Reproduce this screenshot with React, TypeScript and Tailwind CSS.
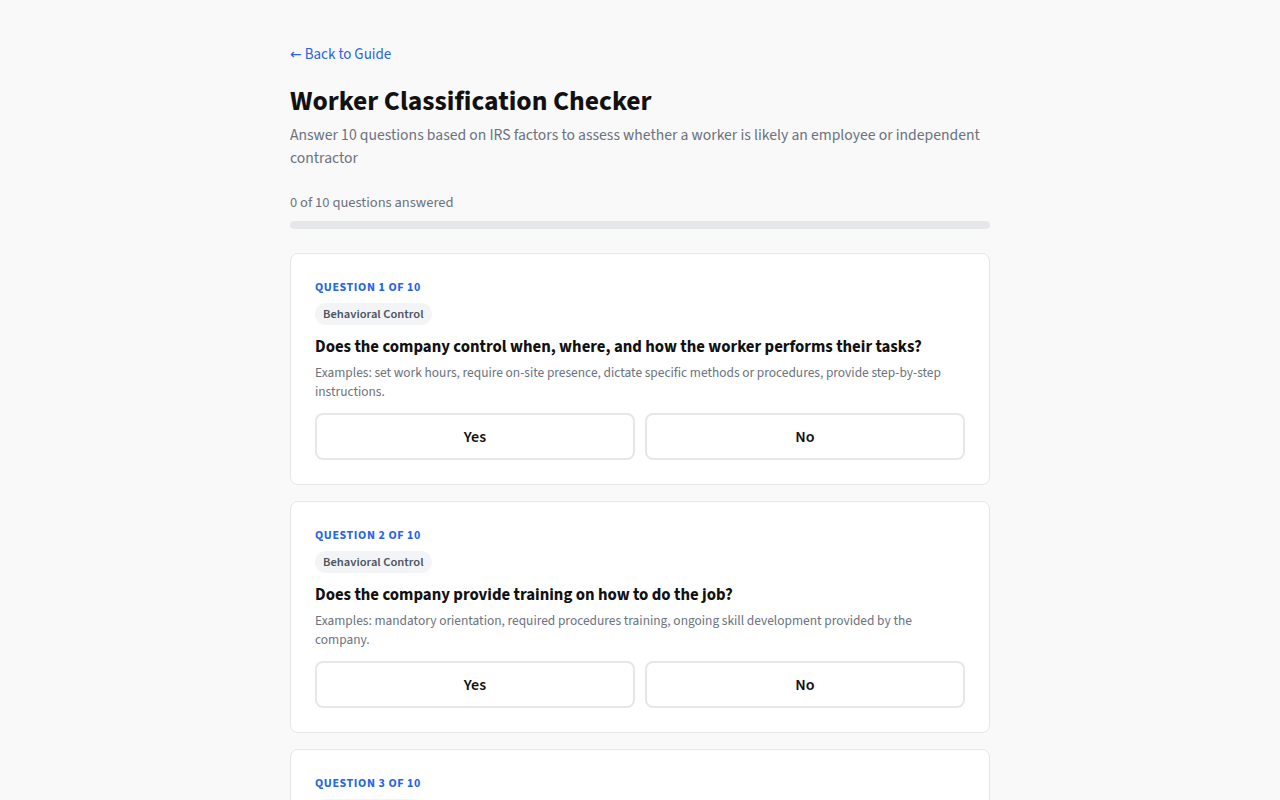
import React, { useState } from 'react'

type Question = {
  id: number;
  category: string;
  text: string;
  examples: string;
}

const questions: Question[] = [
  {
    id: 1,
    category: "Behavioral Control",
    text: "Does the company control when, where, and how the worker performs their tasks?",
    examples: "Examples: set work hours, require on-site presence, dictate specific methods or procedures, provide step-by-step instructions.",
  },
  {
    id: 2,
    category: "Behavioral Control",
    text: "Does the company provide training on how to do the job?",
    examples: "Examples: mandatory orientation, required procedures training, ongoing skill development provided by the company.",
  },
  {
    id: 3,
    category: "Financial Control",
    text: "Does the worker have a significant investment in their own equipment or facilities?",
    examples: "Examples: owns tools, rents office space, purchases specialized software or vehicles used for the work.",
  },
]

const App: React.FC = () => {
  const [answers, setAnswers] = useState<Record<number, string>>({});
  const answered = Object.keys(answers).length;

  return (
    <div className="min-h-screen bg-[#f9f9f9] font-['Source_Sans_3','Source_Sans_Pro',Lato,sans-serif] text-[#111827]">
      <div className="mx-auto w-[700px] pt-[42px] pb-10">
        <a href="#" className="text-[15px] leading-5 text-[#2563eb]">
          <span className="font-['DejaVu_Sans',sans-serif] text-[14px]">←</span> Back to Guide
        </a>

        <h1 className="mt-[18px] text-[27.6px] leading-[36px] font-bold text-[#111111]">Worker Classification Checker</h1>
        <p className="mt-[4px] text-[15.65px] leading-[23px] text-[#6b7280]">
          Answer 10 questions based on IRS factors to assess whether a worker is likely an employee or independent contractor
        </p>

        <div className="mt-[23px]">
          <div className="text-[14.5px] leading-5 text-[#6b7280]">{answered} of 10 questions answered</div>
          <div className="mt-[8px] h-2 w-full rounded-full bg-[#e5e7eb]">
            <div className="h-2 rounded-full bg-[#2563eb]" style={{ width: `${answered * 10}%` }}></div>
          </div>
        </div>

        <div className="mt-[24px] flex flex-col gap-4">
          {questions.map((q) => (
            <div key={q.id} className="rounded-lg border border-[#e5e7eb] bg-white p-6">
              <div className="text-[12px] leading-5 font-bold uppercase tracking-[0.05em] text-[#2563eb]">
                Question {q.id} of 10
              </div>
              <span className="mt-[5px] inline-block rounded-full bg-[#f3f4f6] px-2 py-[3px] text-[12.5px] leading-4 font-semibold text-[#4b5563]">
                {q.category}
              </span>
              <h3 className="mt-[8px] text-[16.75px] leading-[28px] font-bold text-[#111111]">{q.text}</h3>
              <p className="mt-[2px] text-[13.4px] leading-[19px] text-[#6b7280]">{q.examples}</p>
              <div className="mt-[12px] grid grid-cols-2 gap-[10px]">
                {["Yes", "No"].map((opt) => (
                  <button
                    key={opt}
                    onClick={() => setAnswers({ ...answers, [q.id]: opt })}
                    className={
                      answers[q.id] === opt
                        ? "h-[47px] rounded-lg border-2 border-[#2563eb] bg-[#eff6ff] text-[16px] font-semibold text-[#111111]"
                        : "h-[47px] rounded-lg border-2 border-[#e5e7eb] bg-white text-[16px] font-semibold text-[#111111]"
                    }
                  >
                    {opt}
                  </button>
                ))}
              </div>
            </div>
          ))}
        </div>
      </div>
    </div>
  )
}

export default App
